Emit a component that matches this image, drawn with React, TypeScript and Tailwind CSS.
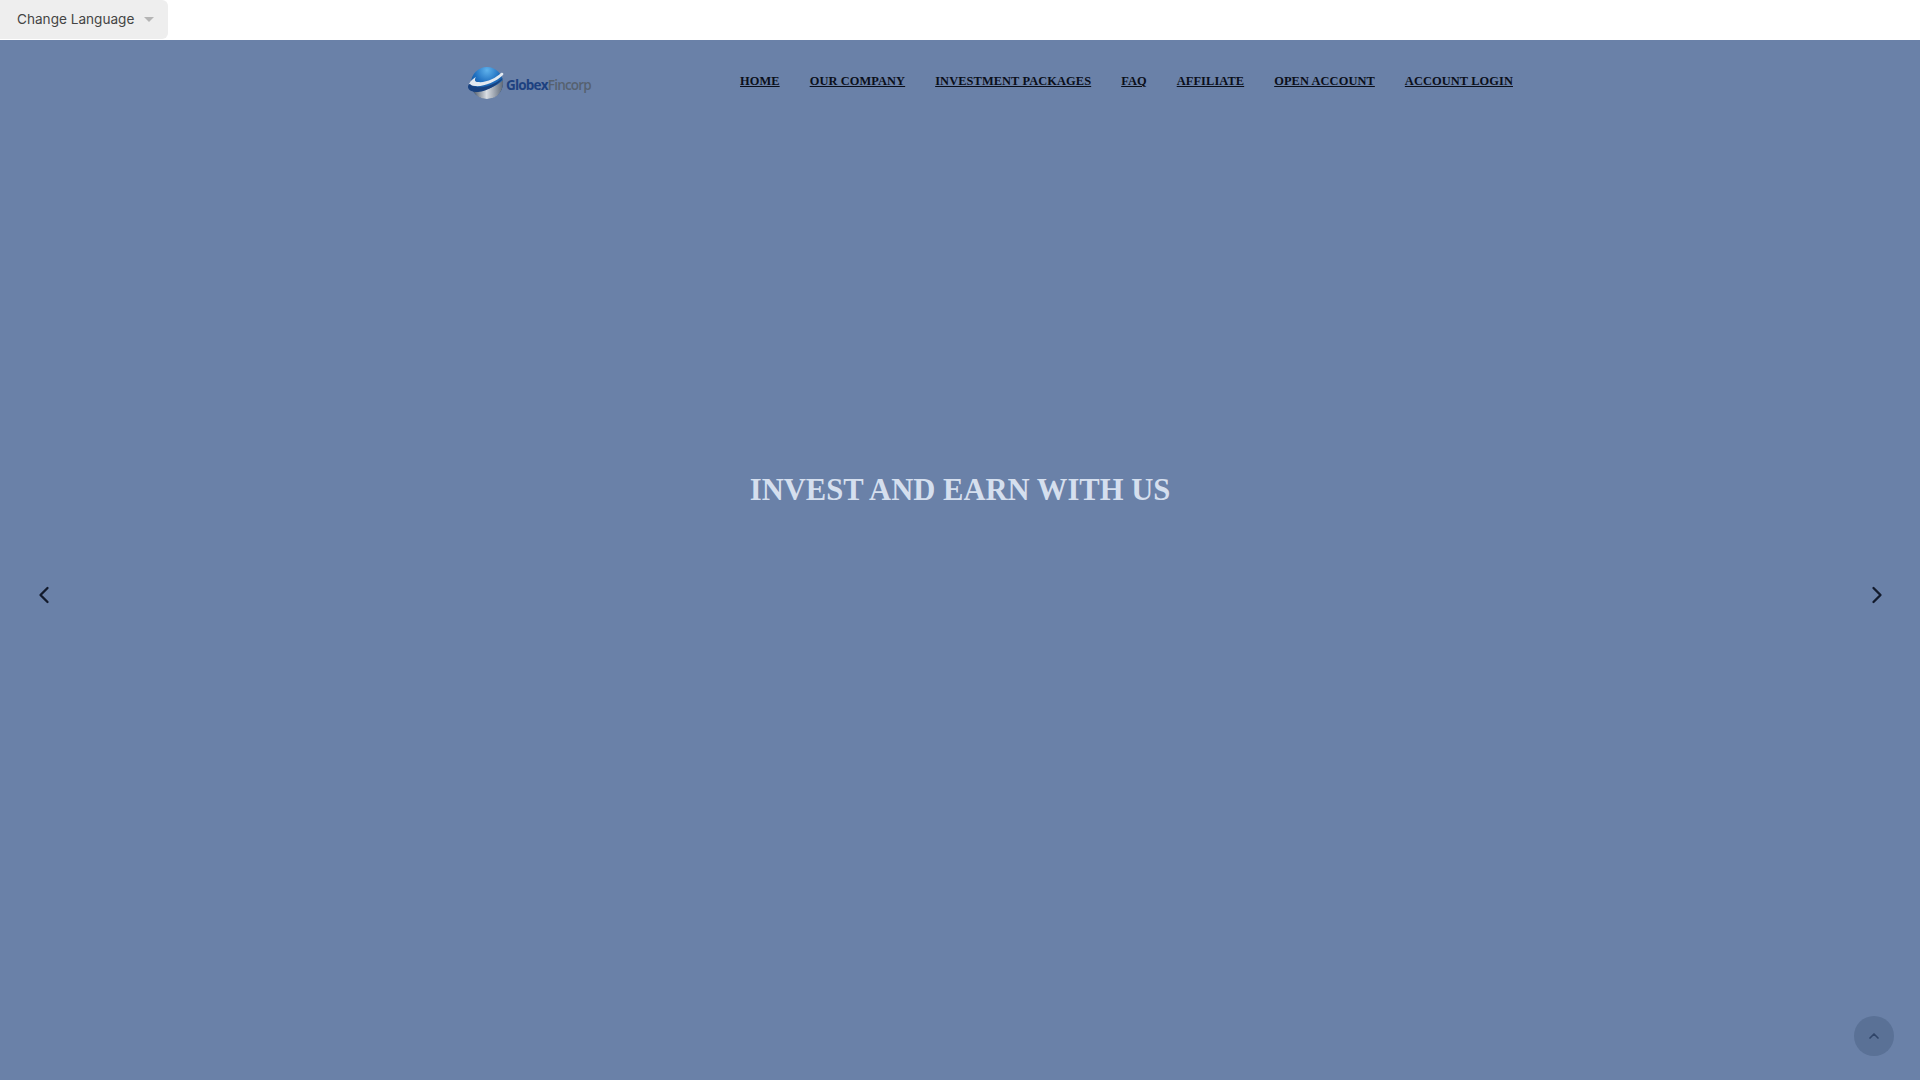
import { ChevronLeft, ChevronRight, ChevronUp } from "lucide-react";

const links = [
  "HOME",
  "OUR COMPANY",
  "INVESTMENT PACKAGES",
  "FAQ",
  "AFFILIATE",
  "OPEN ACCOUNT",
  "ACCOUNT LOGIN",
];

function Logo() {
  return (
    <div className="flex items-center">
      <svg width="38" height="34" viewBox="0 0 38 34">
        <defs>
          <radialGradient id="globe" cx="0.5" cy="0.1" r="0.8">
            <stop offset="0" stopColor="#5fb2ec" />
            <stop offset="0.5" stopColor="#1f6fc0" />
            <stop offset="1" stopColor="#123f7c" />
          </radialGradient>
          <linearGradient id="band" x1="0" y1="0" x2="1" y2="0">
            <stop offset="0" stopColor="#4c5868" />
            <stop offset="0.45" stopColor="#d9dde3" />
            <stop offset="1" stopColor="#5d6878" />
          </linearGradient>
        </defs>
        <circle cx="20" cy="17" r="16" fill="url(#globe)" />
        <path d="M6 25C16 26 29 21 36 14C37 24 31 33 20 33C14 33 9 30 6 25Z" fill="url(#band)" />
        <path d="M2 18C4 14 7 12 9 11C7 14 8 16 11 16C19 17 29 12 34 7C36 6 37 8 36 9C29 16 16 21 8 20C5 20 3 19 2 18Z" fill="#e3e9f0" />
        <path d="M1 21C1 19 2 18 3 18C6 22 14 22 21 20C27 18 32 15 36 12C31 19 20 25 11 26C5 26 1 24 1 21Z" fill="#17407e" />
      </svg>
      <span className="ml-[1px] mt-[4px] font-['Open_Sans',sans-serif] text-[13.5px] font-bold tracking-[-0.8px] text-[#1d4180]">
        Globex<span className="font-semibold text-[#566170]">Fincorp</span>
      </span>
    </div>
  );
}

export default function App() {
  return (
    <div className="h-[1080px] w-full overflow-hidden bg-white font-['Liberation_Serif',serif]">
      <div className="h-10 bg-white">
        <button className="flex h-[39px] w-[168px] items-center rounded-br-md rounded-tr-md bg-[#eeeeee] pl-[17px] font-['Inter',sans-serif] text-[13.6px] text-[#444444]">
          Change Language
          <span className="ml-[10px] h-0 w-0 border-x-[5px] border-t-[5px] border-x-transparent border-t-[#b5b5b5]" />
        </button>
      </div>

      <section className="relative h-[1040px] bg-[#6a81a8]">
        <div className="mx-auto flex w-[1170px] items-start justify-between pl-[92px] pr-[32px] pt-[26px]">
          <Logo />
          <nav className="flex gap-[30px] pt-[5px]">
            {links.map((link) => (
              <a
                key={link}
                href="#"
                className="whitespace-nowrap text-[12.4px] font-bold leading-5 tracking-[0.1px] text-[#0b0f1a] underline"
              >
                {link}
              </a>
            ))}
          </nav>
        </div>

        <h1 className="mt-[365px] text-center text-[30.6px] font-bold leading-[50px] text-[#d5dfee]">
          INVEST AND EARN WITH US
        </h1>

        <ChevronLeft className="absolute left-[30px] top-[541px] h-7 w-7 text-[#121a2c]" strokeWidth={2} />
        <ChevronRight className="absolute right-[29px] top-[541px] h-7 w-7 text-[#121a2c]" strokeWidth={2} />

        <button className="absolute bottom-[24px] right-[26px] flex h-10 w-10 items-center justify-center rounded-full bg-[#5a7196]">
          <ChevronUp className="h-4 w-4 text-[#2f4468]" strokeWidth={2.5} />
        </button>
      </section>
    </div>
  );
}
